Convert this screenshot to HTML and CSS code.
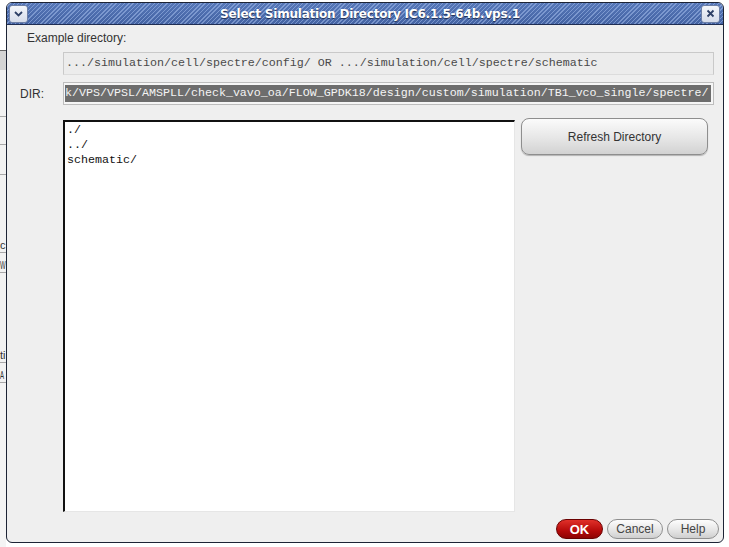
FILE: index.html
```html
<!DOCTYPE html>
<html>
<head>
<meta charset="utf-8">
<title>Select Simulation Directory</title>
<link rel="stylesheet" href="styles.css">
</head>
<body>
<div class="desktop">
  <div class="behind">
    <div class="b-white"></div>
    <div class="b-head"></div>
    <div class="b-row h47"></div>
    <div class="b-row h28"></div>
    <div class="b-row h30"></div>
    <div class="b-txt h60"><span class="frag">c</span></div>
    <div class="b-txt h20"><span class="frag narrow">W</span></div>
    <div class="b-txt h84"><span class="frag">ti</span></div>
    <div class="b-txt h20"><span class="frag narrow">A</span></div>
    <div class="b-rest"></div>
  </div>
  <div class="window">
    <div class="titlebar">
      <div class="tb-btn">
        <svg width="11" height="8" viewBox="0 0 11 8"><path d="M2 2 L5.5 5.5 L9 2" fill="none" stroke="#2d3f66" stroke-width="1.8"/></svg>
      </div>
      <div class="title">Select Simulation Directory IC6.1.5-64b.vps.1</div>
      <div class="tb-btn">
        <svg width="9" height="9" viewBox="0 0 9 9"><path d="M1.5 1.5 L7.5 7.5 M7.5 1.5 L1.5 7.5" fill="none" stroke="#2d3f66" stroke-width="1.8"/></svg>
      </div>
    </div>
    <div class="content">
      <div class="label-row">Example directory:</div>
      <div class="row">
        <div class="lbl"></div>
        <div class="field example">.../simulation/cell/spectre/config/ OR .../simulation/cell/spectre/schematic</div>
      </div>
      <div class="row dir-row">
        <div class="lbl dir">DIR:</div>
        <div class="field dirfield"><span class="sel">k/VPS/VPSL/AMSPLL/check_vavo_oa/FLOW_GPDK18/design/custom/simulation/TB1_vco_single/spectre/</span></div>
      </div>
      <div class="row main-row">
        <div class="lbl"></div>
        <div class="listbox">
          <div>./</div>
          <div>../</div>
          <div>schematic/</div>
        </div>
        <div class="refresh">Refresh Directory</div>
      </div>
      <div class="buttons">
        <div class="btn ok">OK</div>
        <div class="btn cancel">Cancel</div>
        <div class="btn help">Help</div>
      </div>
    </div>
  </div>
</div>
</body>
</html>
```

FILE: styles.css
```css
* { box-sizing: border-box; }
html, body { margin: 0; padding: 0; background: #ffffff; }
body { width: 729px; height: 547px; overflow: hidden; font-family: "Liberation Sans", Arial, sans-serif; }

.desktop { display: flex; width: 729px; height: 547px; }

.behind { width: 6px; display: flex; flex-direction: column; font-size: 12px; color: #333; overflow: hidden; }
.b-white { height: 50px; background: #fff; }
.b-head { height: 20px; background: #d4d4d4; border-top: 1px solid #666; }
.b-row { background: #f2f2f2; border-bottom: 1px solid #a8a8a8; }
.b-txt { background: #f2f2f2; border-bottom: 1px solid #a8a8a8; display: flex; align-items: flex-end; padding-bottom: 1px; line-height: 12px; white-space: nowrap; }
.frag { display: inline-block; width: 6px; font-size: 11px; line-height: 12px; }
.frag.narrow { transform: scaleX(0.55); transform-origin: left center; }
.b-rest { flex: 1; background: #f4f4f4; }
.h47 { height: 47px; }
.h28 { height: 28px; }
.h30 { height: 30px; }
.h60 { height: 78px; }
.h20 { height: 20px; }
.h84 { height: 90px; }

.window {
  margin-top: 2px;
  width: 718px;
  height: 541px;
  border: 1px solid #1d2435;
  border-radius: 6px;
  background: #efefef;
  display: flex;
  flex-direction: column;
  overflow: hidden;
}

.titlebar {
  height: 22px;
  flex: none;
  display: flex;
  align-items: center;
  padding: 0 3px 0 2px;
  border-bottom: 1px solid #1f2d52;
  background:
    repeating-linear-gradient(135deg, rgba(255,255,255,0) 0px, rgba(255,255,255,0) 2px, rgba(170,195,240,0.5) 2px, rgba(170,195,240,0.5) 3px),
    linear-gradient(#5677b8, #4463a3);
}
.tb-btn {
  width: 19px;
  height: 18px;
  flex: none;
  border: 1px solid #6d7fa6;
  border-radius: 3px;
  background: linear-gradient(#f3f5fa, #d6dcea);
  display: flex;
  align-items: center;
  justify-content: center;
}
.title {
  flex: 1;
  text-align: center;
  padding-left: 11px;
  color: #ffffff;
  font-family: "DejaVu Sans", sans-serif;
  font-weight: bold;
  font-size: 12px;
  letter-spacing: -0.2px;
  text-shadow: 0 1px 1px #1c2b4e;
  white-space: nowrap;
}

.content { flex: 1; display: flex; flex-direction: column; }

.label-row { height: 27px; padding: 6px 0 0 20px; font-size: 12px; line-height: 14px; color: #333; }

.row { display: flex; }
.lbl { width: 56px; flex: none; font-size: 12px; color: #333; }
.lbl.dir { padding-left: 13px; display: flex; align-items: center; }

.field {
  width: 651px;
  height: 23px;
  font-family: "Liberation Mono", "Courier New", monospace;
  font-size: 11.67px;
  line-height: 21px;
  padding-left: 2px;
  white-space: nowrap;
  overflow: hidden;
}
.example { border: 1px solid #c9c9c9; border-bottom-color: #dcdcdc; background: #ececec; color: #4a4a4a; padding-left: 2px; }
.dir-row { margin-top: 7px; }
.dirfield { border: 1px solid #bdbdbd; background: #f6f6f6; padding: 2px 0 0 1px; line-height: 17px; }
.sel { background: #6d6d6d; color: #f4f4f4; display: inline-block; height: 17px; padding-right: 2px; }

.main-row { margin-top: 13px; align-items: flex-start; }
.listbox {
  width: 452px;
  height: 392px;
  margin-top: 2px;
  background: #ffffff;
  border-top: 2px solid #111;
  border-left: 2px solid #111;
  border-right: 1px solid #e6e6e6;
  border-bottom: 1px solid #e6e6e6;
  padding: 1px 0 0 2px;
  font-family: "Liberation Mono", "Courier New", monospace;
  font-size: 11.67px;
  line-height: 15px;
  color: #111;
}
.refresh {
  margin-left: 6px;
  width: 187px;
  height: 37px;
  border: 1px solid #8e8e8e;
  border-radius: 8px;
  background: linear-gradient(#fbfbfb, #e6e6e6 55%, #d2d2d2);
  box-shadow: 0 1px 1px rgba(0,0,0,0.25);
  display: flex;
  align-items: center;
  justify-content: center;
  font-size: 12px;
  color: #333;
}

.buttons { display: flex; justify-content: flex-end; gap: 4px; padding: 7px 4px 0 0; }
.btn {
  height: 20px;
  border-radius: 10px;
  display: flex;
  align-items: center;
  justify-content: center;
  font-size: 12px;
}
.ok { width: 47px; background: linear-gradient(#e0302a, #b50a0a 60%, #8e0303); border: 1px solid #6a0000; color: #fff; font-weight: bold; font-size: 13px; }
.cancel { width: 56px; background: linear-gradient(#fdfdfd, #e4e4e4 60%, #cfcfcf); border: 1px solid #8f8f8f; color: #444; }
.help { width: 52px; background: linear-gradient(#fdfdfd, #e4e4e4 60%, #cfcfcf); border: 1px solid #8f8f8f; color: #444; }
```
